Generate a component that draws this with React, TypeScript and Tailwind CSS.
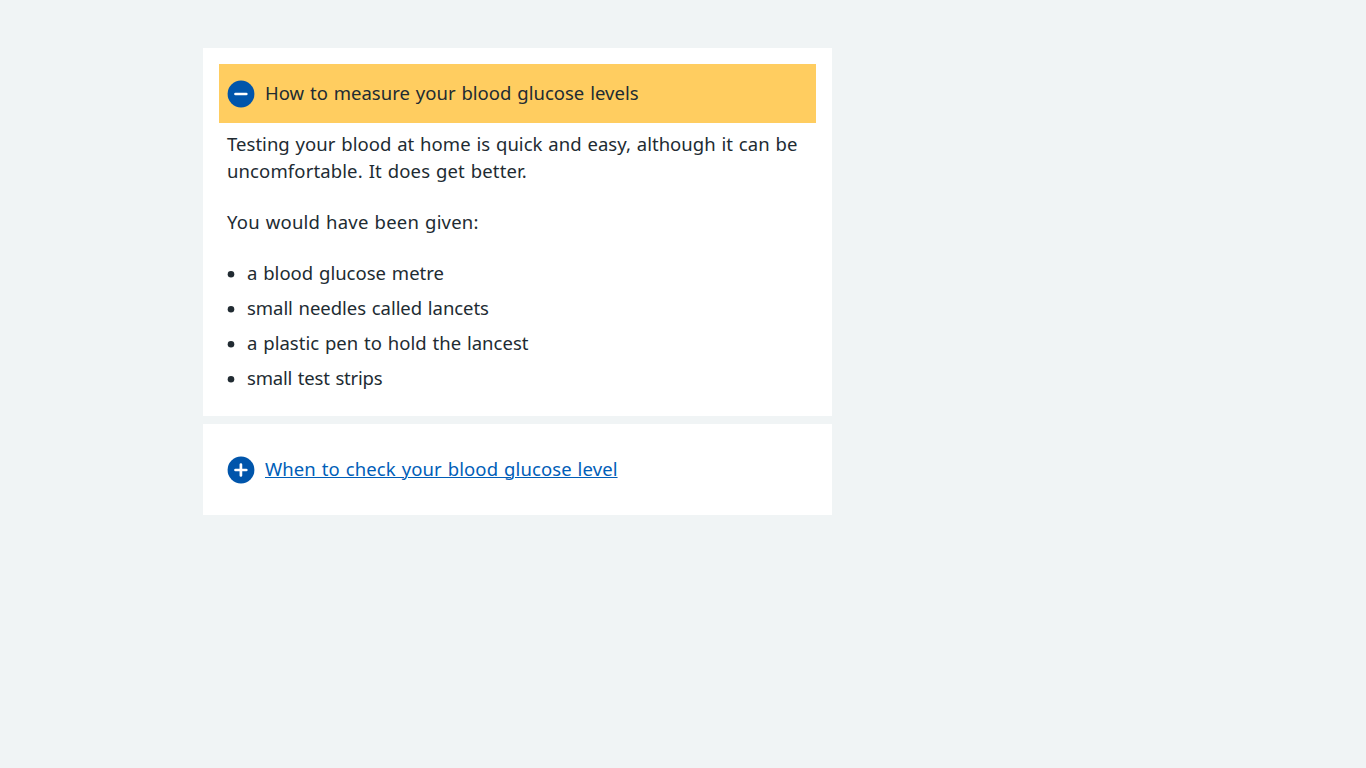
import React from "react";

function Icon({ open }: { open: boolean }) {
  return (
    <svg className="h-[28px] w-[28px] shrink-0" viewBox="0 0 28 28" aria-hidden="true">
      <circle cx="14" cy="14" r="13.4" fill="#0055ab" />
      <path
        d={open ? "M8.5 14h10.8" : "M8.5 14h10.8M13.9 8.6v10.8"}
        stroke="#fff"
        strokeWidth="2.7"
        strokeLinecap="round"
      />
    </svg>
  );
}

function Bullet() {
  return (
    <svg className="mt-[2px] mr-3 size-2 shrink-0" viewBox="0 0 8 8" aria-hidden="true">
      <circle cx="4" cy="4.2" r="3.3" fill="#212b32" />
    </svg>
  );
}

const items = [
  { text: "a blood glucose metre", tracking: "tracking-[0.01px]" },
  { text: "small needles called lancets", tracking: "tracking-[-0.05px]" },
  { text: "a plastic pen to hold the lancest", tracking: "tracking-[0.02px]" },
  { text: "small test strips", tracking: "tracking-[-0.18px]" },
];

export default function App() {
  return (
    <main className="min-h-screen bg-[#f0f4f5] pt-12 pl-[203px] font-['Noto_Sans',sans-serif] text-[18.5px] leading-[27px] text-[#212b32] [word-spacing:1px]">
      <section className="h-[368px] w-[629px] bg-white p-4">
        <div className="flex h-[59px] items-center gap-[10px] bg-[#ffcd60] pl-2">
          <Icon open />
          <span className="pb-[2px] whitespace-nowrap tracking-[0.02px]">How to measure your blood glucose levels</span>
        </div>
        <div className="px-2 pt-[7px]">
          <p>
            <span className="block whitespace-nowrap tracking-[0.03px]">
              Testing your blood at home is quick and easy, although it can be
            </span>
            <span className="block whitespace-nowrap tracking-[0.12px]">uncomfortable. It does get better.</span>
          </p>
          <p className="mt-6 tracking-[0.2px]">You would have been given:</p>
          <ul className="mt-6 flex flex-col gap-2">
            {items.map((item) => (
              <li key={item.text} className="flex items-center">
                <Bullet />
                <span className={item.tracking}>{item.text}</span>
              </li>
            ))}
          </ul>
        </div>
      </section>
      <section className="mt-2 flex h-[91px] w-[629px] items-center gap-[10px] bg-white pl-6">
        <Icon open={false} />
        <a className="pb-[2px] whitespace-nowrap tracking-[0.1px] text-[#005eb8] underline decoration-1">
          When to check your blood glucose level
        </a>
      </section>
    </main>
  );
}
